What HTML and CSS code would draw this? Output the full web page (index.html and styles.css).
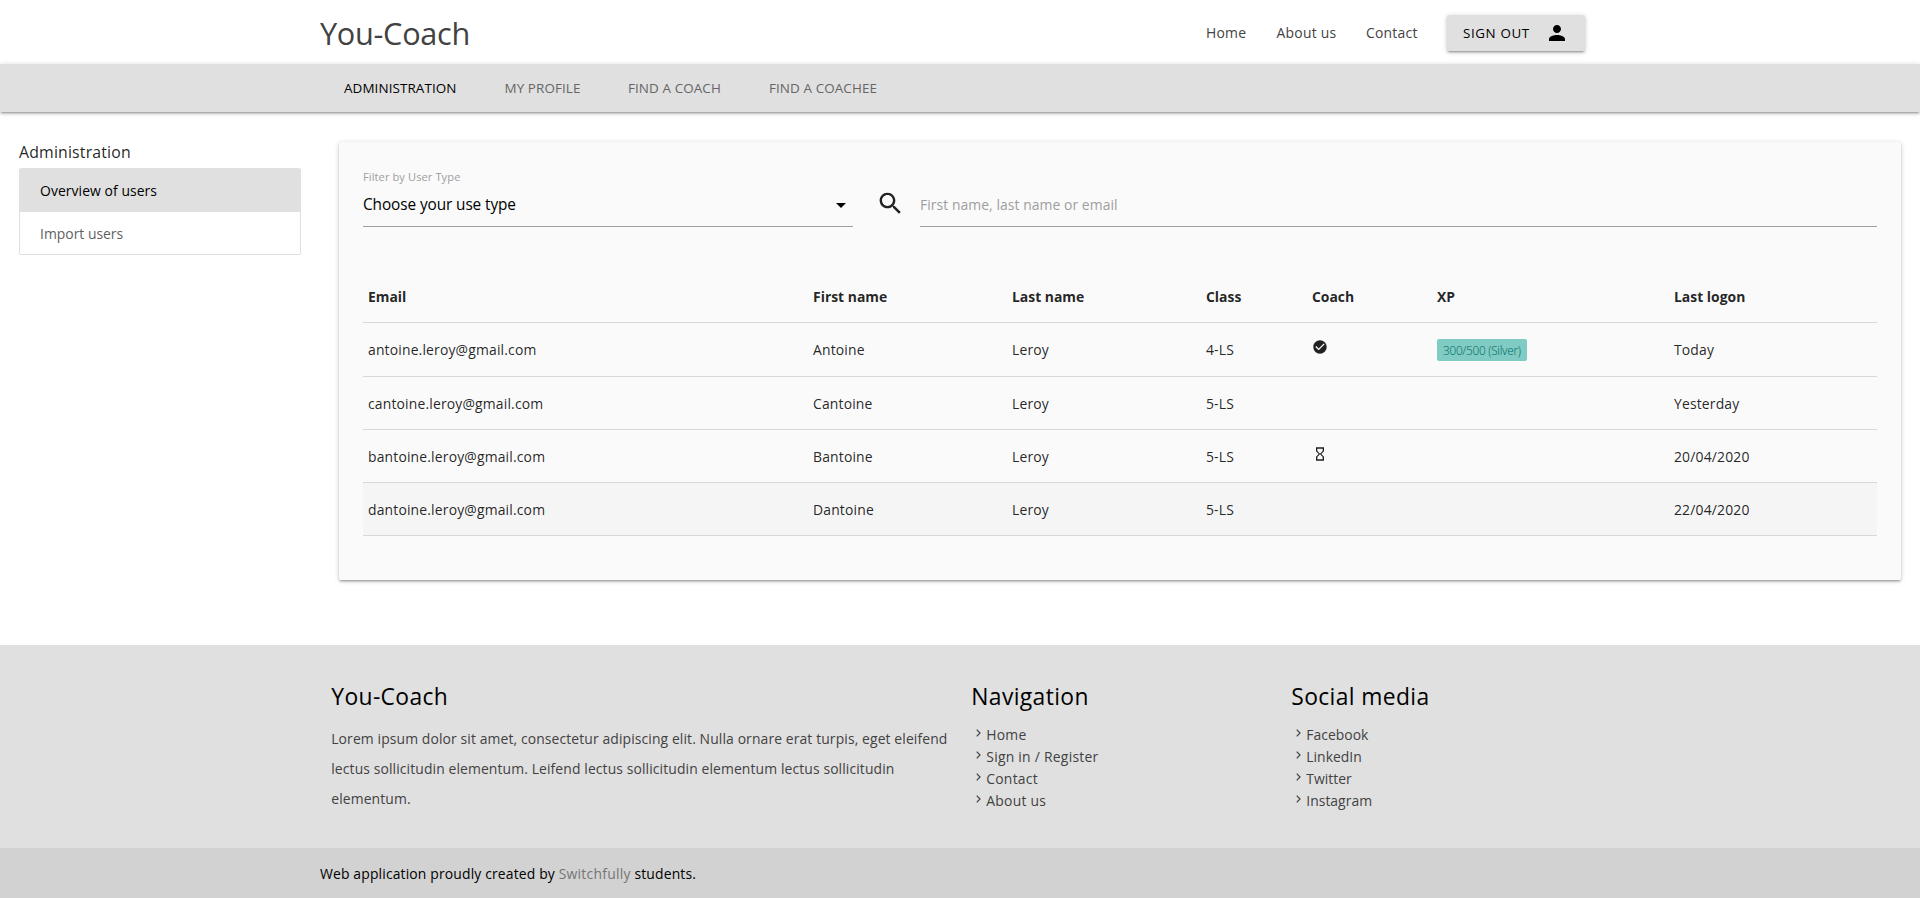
FILE: index.html
```html
<!DOCTYPE html>
<html lang="en">
<head>
<meta charset="utf-8">
<title>You-Coach</title>
<link rel="stylesheet" href="styles.css">
</head>
<body>
<header class="topbar">
  <div class="container topbar-inner">
    <a class="logo">You-Coach</a>
    <nav class="toplinks">
      <a class="w-home">Home</a>
      <a class="w-about">About us</a>
      <a class="w-contact">Contact</a>
      <button class="btn" type="button">
        <span>Sign out</span>
        <svg width="24" height="24" viewBox="0 0 24 24"><path d="M12 12c2.21 0 4-1.79 4-4s-1.79-4-4-4-4 1.79-4 4 1.79 4 4 4zm0 2c-2.67 0-8 1.34-8 4v2h16v-2c0-2.66-5.33-4-8-4z"/></svg>
      </button>
    </nav>
  </div>
</header>
<nav class="subnav">
  <div class="container subnav-inner">
    <a class="current">Administration</a>
    <a class="w-profile">My profile</a>
    <a class="w-coach">Find a coach</a>
    <a class="w-coachee">Find a coachee</a>
  </div>
</nav>
<main class="content">
  <aside>
    <h2 class="side-title">Administration</h2>
    <div class="collection">
      <a class="item active">Overview of users</a>
      <a class="item">Import users</a>
    </div>
  </aside>
  <section class="card">
    <div class="filters">
      <div class="field select">
        <label>Filter by User Type</label>
        <div class="value">
          <span>Choose your use type</span>
          <svg width="24" height="24" viewBox="0 0 24 24"><path d="M7 10l5 5 5-5z"/></svg>
        </div>
      </div>
      <svg class="search" width="29" height="29" viewBox="0 0 24 24"><path d="M15.5 14h-.79l-.28-.27C15.41 12.59 16 11.11 16 9.5 16 5.91 13.09 3 9.5 3S3 5.91 3 9.5 5.91 16 9.5 16c1.61 0 3.09-.59 4.23-1.57l.27.28v.79l5 4.99L20.49 19l-4.99-5zm-6 0C7.01 14 5 11.99 5 9.5S7.01 5 9.5 5 14 7.01 14 9.5 11.99 14 9.5 14z"/></svg>
      <div class="field query"><div class="value">First name, last name or email</div></div>
    </div>
    <table class="users">
      <colgroup><col class="c-email"><col class="c-first"><col class="c-last"><col class="c-class"><col class="c-coach"><col class="c-xp"><col class="c-logon"></colgroup>
      <thead>
        <tr><th>Email</th><th>First name</th><th>Last name</th><th>Class</th><th>Coach</th><th>XP</th><th>Last logon</th></tr>
      </thead>
      <tbody>
        <tr class="tall"><td>antoine.leroy@gmail.com</td><td>Antoine</td><td>Leroy</td><td>4-LS</td><td><svg class="status" width="16" height="16" viewBox="0 0 24 24"><path d="M12 2C6.48 2 2 6.48 2 12s4.48 10 10 10 10-4.48 10-10S17.52 2 12 2zm-2 15l-5-5 1.41-1.41L10 14.17l7.59-7.59L19 8l-9 9z"/></svg></td><td><span class="badge">300/500 (Silver)</span></td><td>Today</td></tr>
        <tr><td>cantoine.leroy@gmail.com</td><td>Cantoine</td><td>Leroy</td><td>5-LS</td><td></td><td></td><td>Yesterday</td></tr>
        <tr><td>bantoine.leroy@gmail.com</td><td>Bantoine</td><td>Leroy</td><td>5-LS</td><td><svg class="status" width="16" height="16" viewBox="0 0 24 24"><path d="M6 2v6h.01L6 8.01 10 12l-4 4 .01.01H6V22h12v-5.99h-.01L18 16l-4-4 4-3.99-.01-.01H18V2H6zm10 14.5V20H8v-3.5l4-4 4 4zm-4-5l-4-4V4h8v3.5l-4 4z"/></svg></td><td></td><td>20/04/2020</td></tr>
        <tr class="hover"><td>dantoine.leroy@gmail.com</td><td>Dantoine</td><td>Leroy</td><td>5-LS</td><td></td><td></td><td>22/04/2020</td></tr>
      </tbody>
    </table>
  </section>
</main>
<footer class="footer">
  <div class="container footer-cols">
    <div class="col about">
      <h3>You-Coach</h3>
      <p>Lorem ipsum dolor sit amet, consectetur adipiscing elit. Nulla ornare erat turpis, eget eleifend<br>lectus sollicitudin elementum. Leifend lectus sollicitudin elementum lectus sollicitudin<br>elementum.</p>
    </div>
    <div class="col">
      <h3>Navigation</h3>
      <ul>
        <li><svg class="chev" width="5" height="8" viewBox="0 0 5 8"><path d="M.7.7 4 4 .7 7.3"/></svg>Home</li>
        <li><svg class="chev" width="5" height="8" viewBox="0 0 5 8"><path d="M.7.7 4 4 .7 7.3"/></svg>Sign in / Register</li>
        <li><svg class="chev" width="5" height="8" viewBox="0 0 5 8"><path d="M.7.7 4 4 .7 7.3"/></svg>Contact</li>
        <li><svg class="chev" width="5" height="8" viewBox="0 0 5 8"><path d="M.7.7 4 4 .7 7.3"/></svg>About us</li>
      </ul>
    </div>
    <div class="col">
      <h3>Social media</h3>
      <ul class="tight">
        <li><svg class="chev" width="5" height="8" viewBox="0 0 5 8"><path d="M.7.7 4 4 .7 7.3"/></svg>Facebook</li>
        <li><svg class="chev" width="5" height="8" viewBox="0 0 5 8"><path d="M.7.7 4 4 .7 7.3"/></svg>LinkedIn</li>
        <li><svg class="chev" width="5" height="8" viewBox="0 0 5 8"><path d="M.7.7 4 4 .7 7.3"/></svg>Twitter</li>
        <li><svg class="chev" width="5" height="8" viewBox="0 0 5 8"><path d="M.7.7 4 4 .7 7.3"/></svg>Instagram</li>
      </ul>
    </div>
  </div>
  <div class="copyright">
    <div class="container">Web application proudly created by <a>Switchfully</a> students.</div>
  </div>
</footer>
</body>
</html>
```

FILE: styles.css
```css
* { box-sizing: border-box; }

body {
  margin: 0;
  background: #fff;
  color: rgba(0, 0, 0, .87);
  font: 400 13.92px/22px "Open Sans", "Noto Sans", sans-serif;
  letter-spacing: .1px;
}

h2, h3, p, ul { margin: 0; padding: 0; font-weight: 400; list-style: none; }
svg { display: block; fill: currentColor; flex: none; }

.container { width: 1280px; margin: 0 auto; }

/* Header */
.topbar { height: 64px; }
.topbar-inner { display: flex; justify-content: space-between; height: 64px; }
.logo { font-size: 30.7px; line-height: 66px; letter-spacing: -.3px; color: #424242; }
.toplinks { display: flex; align-items: center; padding-right: 15px; color: #424242; letter-spacing: .24px; }
.toplinks a { padding-top: 2px; line-height: 64px; }
.w-home { width: 70.5px; }
.w-about { width: 89.5px; }
.w-contact { width: 81px; }
.btn {
  display: flex; justify-content: space-between; align-items: center;
  width: 138px; height: 36px; margin: 2px 0 0; padding: 0 16px;
  border: 0; border-radius: 2px; background: #e0e0e0; color: #000;
  font: 400 13.4px/36px "Open Sans", sans-serif; letter-spacing: .6px;
  text-transform: uppercase;
  box-shadow: 0 2px 2px 0 rgba(0,0,0,.14), 0 3px 1px -2px rgba(0,0,0,.12), 0 1px 5px 0 rgba(0,0,0,.2);
}

.subnav {
  height: 48px; background: #e0e0e0; color: #666;
  font-size: 13.44px; letter-spacing: .09px; line-height: 48px; text-transform: uppercase;
  box-shadow: 0 2px 2px 0 rgba(0,0,0,.14), 0 3px 1px -2px rgba(0,0,0,.12), 0 1px 5px 0 rgba(0,0,0,.2);
}
.subnav-inner { display: flex; padding-left: 24px; }
.current { width: 160.5px; color: #000; }
.w-profile { width: 123.5px; }
.w-coach { width: 141px; }

/* Content */
.content {
  display: grid; grid-template-columns: 282px 1fr; gap: 38px; align-items: start;
  height: 533px; padding: 30px 19px 0;
}
.side-title { height: 26px; font-size: 15.84px; line-height: 20px; letter-spacing: .18px; }
.collection { border: 1px solid #e0e0e0; border-radius: 2px; overflow: hidden; }
.item { display: block; height: 42px; padding: 0 20px; line-height: 44px; color: #616161; letter-spacing: 0; }
.item.active { height: 43px; background: #e0e0e0; color: #000; line-height: 43px; letter-spacing: .07px; }

.card {
  height: 438px; padding: 24px; border-radius: 2px; background: #fafafa;
  box-shadow: 0 2px 2px 0 rgba(0,0,0,.14), 0 3px 1px -2px rgba(0,0,0,.12), 0 1px 5px 0 rgba(0,0,0,.2);
}
.filters { display: flex; height: 104px; }
.select { width: 490px; }
label { display: block; height: 17px; padding-top: 3px; font-size: 11.14px; line-height: 16px; letter-spacing: .07px; color: #9e9e9e; }
.value { display: flex; justify-content: space-between; align-items: center; height: 44px; border-bottom: 1px solid #9e9e9e; }
.select .value { color: #000; font-size: 15.36px; letter-spacing: -.09px; }
.search { margin: 23px 15.5px 0 22.5px; }
.query { flex: 1; padding-top: 17px; }
.query .value { color: #9e9e9e; letter-spacing: .06px; }

/* Users table */
.users { width: 1514px; border-collapse: separate; border-spacing: 0; table-layout: fixed; }
.c-email { width: 445px; }
.c-first { width: 199px; }
.c-last { width: 194px; }
.c-class { width: 106px; }
.c-coach { width: 125px; }
.c-xp { width: 237px; }
.c-logon { width: 208px; }
th, td { height: 53px; padding: 2px 5px 0; border-bottom: 1px solid #d8d8d8; text-align: left; vertical-align: middle; letter-spacing: .17px; }
th { font-weight: 700; letter-spacing: 0; }
.tall td { height: 54px; padding-top: 1px; }
.hover { background: #f5f5f5; }
.status { margin: -6px 0 0 -.5px; }
.badge {
  display: block; width: 90px; height: 22px; padding-left: 6px; border-radius: 2px;
  background: #80cbc4; color: #00695c;
  font-size: 11.8px; font-weight: 300; line-height: 23px; letter-spacing: -.28px;
}

/* Footer */
.footer { background: #e0e0e0; color: #424242; }
.footer-cols { display: grid; grid-template-columns: 640px 320px 320px; height: 203px; padding-top: 36px; }
.col { padding: 0 11.25px; white-space: nowrap; }
h3 { height: 43px; color: #000; font-size: 22.85px; line-height: 31px; letter-spacing: .37px; }
.about p { line-height: 30px; letter-spacing: .11px; }
li { display: flex; height: 22px; line-height: 22px; letter-spacing: .25px; margin-left: 5px; gap: 5px; }
.tight li { letter-spacing: .03px; }
.chev { margin-top: 5px; fill: none; stroke: currentColor; stroke-width: 1.2; }
.copyright { height: 50px; padding-top: 1px; background: #d2d2d2; color: #000; line-height: 50px; letter-spacing: .15px; }
.copyright a { color: #757575; letter-spacing: .25px; }
```
